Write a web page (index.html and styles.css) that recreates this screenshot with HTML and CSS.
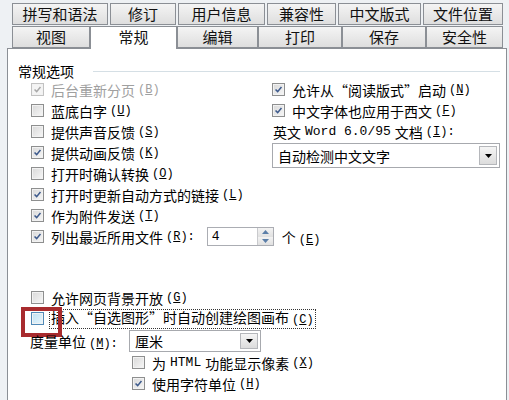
FILE: index.html
```html
<!DOCTYPE html>
<html lang="zh-CN">
<head>
    <meta charset="UTF-8">
    <title>选项 - 常规</title>
    <link rel="stylesheet" href="styles.css">
</head>
<body>

<div class="tabs">
    <div class="tab-row back">
        <div class="tab">拼写和语法</div>
        <div class="tab">修订</div>
        <div class="tab">用户信息</div>
        <div class="tab">兼容性</div>
        <div class="tab">中文版式</div>
        <div class="tab">文件位置</div>
    </div>
    <div class="tab-row front">
        <div class="tab">视图</div>
        <div class="tab active">常规</div>
        <div class="tab">编辑</div>
        <div class="tab">打印</div>
        <div class="tab">保存</div>
        <div class="tab">安全性</div>
    </div>
</div>

<div class="panel">
    <div class="group-title"><span>常规选项</span></div>

    <div class="columns">
        <div class="col-left">
            <div class="opt disabled"><span class="cb checked"><svg viewBox="0 0 13 13"><path d="M3 6.5 5.5 9 10 3.5"/></svg></span>后台重新分页<span class="key">(<u>B</u>)</span></div>
            <div class="opt"><span class="cb"></span>蓝底白字<span class="key">(<u>U</u>)</span></div>
            <div class="opt"><span class="cb"></span>提供声音反馈<span class="key">(<u>S</u>)</span></div>
            <div class="opt"><span class="cb checked"><svg viewBox="0 0 13 13"><path d="M3 6.5 5.5 9 10 3.5"/></svg></span>提供动画反馈<span class="key">(<u>K</u>)</span></div>
            <div class="opt"><span class="cb"></span>打开时确认转换<span class="key">(<u>O</u>)</span></div>
            <div class="opt"><span class="cb checked"><svg viewBox="0 0 13 13"><path d="M3 6.5 5.5 9 10 3.5"/></svg></span>打开时更新自动方式的链接<span class="key">(<u>L</u>)</span></div>
            <div class="opt"><span class="cb checked"><svg viewBox="0 0 13 13"><path d="M3 6.5 5.5 9 10 3.5"/></svg></span>作为附件发送<span class="key">(<u>T</u>)</span></div>
            <div class="opt"><span class="cb checked"><svg viewBox="0 0 13 13"><path d="M3 6.5 5.5 9 10 3.5"/></svg></span>列出最近所用文件<span class="key">(<u>R</u>):</span>
                <div class="spin">
                    <span class="spin-value">4</span>
                    <span class="spin-btns">
                        <span class="spin-btn"><svg viewBox="0 0 7 4"><path d="M0 4 3.5 0 7 4z"/></svg></span>
                        <span class="spin-btn"><svg viewBox="0 0 7 4"><path d="M0 0 3.5 4 7 0z"/></svg></span>
                    </span>
                </div>
                <span class="unit">个<span class="key">(<u>E</u>)</span></span>
            </div>
        </div>

        <div class="col-right">
            <div class="opt"><span class="cb checked"><svg viewBox="0 0 13 13"><path d="M3 6.5 5.5 9 10 3.5"/></svg></span>允许从“阅读版式”启动<span class="key">(<u>N</u>)</span></div>
            <div class="opt"><span class="cb checked"><svg viewBox="0 0 13 13"><path d="M3 6.5 5.5 9 10 3.5"/></svg></span>中文字体也应用于西文<span class="key">(<u>F</u>)</span></div>
            <div class="opt label">英文 <span class="mono">Word 6.0/95</span> 文档<span class="key">(<u>I</u>):</span></div>
            <div class="select wide">
                <span class="select-text">自动检测中文文字</span>
                <span class="drop"><svg viewBox="0 0 7 4"><path d="M0 0 3.5 4 7 0z"/></svg></span>
            </div>
        </div>
    </div>

    <div class="lower">
        <div class="opt"><span class="cb"></span>允许网页背景开放<span class="key">(<u>G</u>)</span></div>
        <div class="opt focused">
            <span class="cb hover"></span><span class="focus-text">插入“自选图形”时自动创建绘图画布<span class="key">(<u>C</u>)</span></span>
            <span class="mark"></span>
        </div>
        <div class="opt unit-row">
            <span class="unit-label">度量单位<span class="key">(<u>M</u>):</span></span>
            <div class="select short">
                <span class="select-text">厘米</span>
                <span class="drop"><svg viewBox="0 0 7 4"><path d="M0 0 3.5 4 7 0z"/></svg></span>
            </div>
        </div>
        <div class="opt sub"><span class="cb"></span>为 <span class="mono">HTML</span> 功能显示像素<span class="key">(<u>X</u>)</span></div>
        <div class="opt sub"><span class="cb checked"><svg viewBox="0 0 13 13"><path d="M3 6.5 5.5 9 10 3.5"/></svg></span>使用字符单位<span class="key">(<u>H</u>)</span></div>
    </div>
</div>

</body>
</html>
```

FILE: styles.css
```css
body {
    margin: 0;
    background-color: #eef1f4;
    font-family: "Noto Sans CJK SC", sans-serif;
    font-size: 14px;
    color: #000;
    overflow: hidden;
}

/* tabs */

.tabs {
    padding: 3px 0 0 12px;
}

.tab-row {
    display: flex;
    height: 22px;
}

.tab-row.back {
    gap: 2px;
}

.tab-row.front {
    margin-top: 1px;
}

.tab {
    box-sizing: border-box;
    height: 22px;
    border: 1px solid #8b8f95;
    background: linear-gradient(#f4f4f4, #dedede);
    font-size: 15px;
    line-height: 19px;
    text-align: center;
    color: #111;
}

.back .tab:nth-child(1) { width: 96px; }
.back .tab:nth-child(2) { width: 66px; }
.back .tab:nth-child(3) { width: 87px; }
.back .tab:nth-child(4) { width: 69px; }
.back .tab:nth-child(5) { width: 83px; }
.back .tab:nth-child(6) { width: 80px; }

.front .tab:nth-child(1) { width: 78px; }
.front .tab:nth-child(2) { width: 87px; }
.front .tab:nth-child(3) { width: 81px; }
.front .tab:nth-child(4) { width: 84px; }
.front .tab:nth-child(5) { width: 84px; }
.front .tab:nth-child(6) { width: 77px; }

.tab.active {
    position: relative;
    z-index: 1;
    height: 23px;
    margin-bottom: -1px;
    border-bottom: none;
    background: #fff;
    line-height: 20px;
}

/* panel */

.panel {
    box-sizing: border-box;
    width: 500px;
    height: 360px;
    margin-left: 7px;
    padding: 15px 0 0 10px;
    border: 1px solid #8b8f95;
    background-color: #fff;
}

.group-title {
    display: flex;
    align-items: center;
    height: 15px;
    line-height: 15px;
}

.group-title::after {
    content: "";
    flex: 1;
    margin: 0 6px 0 19px;
    border-top: 1px solid #d5dfe5;
}

.columns {
    display: flex;
    padding-left: 13px;
}

.col-left {
    flex-shrink: 0;
    width: 241px;
}

.col-right {
    flex: 1;
}

.opt {
    position: relative;
    display: flex;
    align-items: center;
    height: 21px;
    white-space: nowrap;
}

.opt > * {
    flex-shrink: 0;
}

.opt.disabled {
    color: #a0a0a0;
}

.key {
    margin-left: 3px;
    font-family: "Liberation Mono", monospace;
    font-size: 12px;
}

.mono {
    font-family: "Liberation Mono", monospace;
    font-size: 13px;
    margin: 0 4px;
}

.label {
    padding-left: 1px;
}

/* checkbox */

.cb {
    box-sizing: border-box;
    width: 13px;
    height: 13px;
    margin-right: 7px;
    border: 1px solid #8e8f8f;
    background: linear-gradient(135deg, #d8d8d8, #f7f7f7);
    box-shadow: inset 0 0 0 1px #f2f2f2;
}

.cb svg {
    display: block;
    width: 11px;
    height: 11px;
    fill: none;
    stroke: #3d5a8c;
    stroke-width: 1.8;
}

.disabled .cb {
    border-color: #c2c2c2;
    background: #f4f4f4;
}

.disabled .cb svg {
    stroke: #a8a8a8;
}

.cb.hover {
    border-color: #4f8ab8;
    background: linear-gradient(135deg, #bfe2f4, #e8f6fd);
}

/* spinner */

.spin {
    box-sizing: border-box;
    display: flex;
    width: 67px;
    height: 19px;
    margin-left: 12px;
    border: 1px solid #abadb3;
}

.spin-value {
    flex: 1;
    padding-left: 4px;
    line-height: 17px;
    font-family: "Liberation Mono", monospace;
    font-size: 13px;
}

.spin-btns {
    display: flex;
    flex-direction: column;
    width: 16px;
}

.spin-btn {
    flex: 1;
    display: flex;
    align-items: center;
    justify-content: center;
    background: linear-gradient(#f3f3f3, #e0e0e0);
    border-left: 1px solid #c9cacd;
}

.spin-btn svg {
    width: 7px;
    height: 4px;
    fill: #5b7ea8;
}

.unit {
    margin-left: 8px;
}

/* select */

.select {
    box-sizing: border-box;
    display: flex;
    align-items: center;
    border: 1px solid #a7a9ae;
    background-color: #fff;
}

.select.wide {
    width: 228px;
    height: 25px;
    margin-top: 1px;
}

.select.short {
    width: 132px;
    height: 22px;
}

.select-text {
    flex: 1;
    padding-left: 5px;
}

.drop {
    box-sizing: border-box;
    display: flex;
    align-items: center;
    justify-content: center;
    width: 18px;
    height: calc(100% - 4px);
    margin-right: 2px;
    border: 1px solid #b5b7bb;
    background: linear-gradient(#f5f5f5, #dcdcdc);
}

.drop svg {
    width: 7px;
    height: 4px;
    fill: #000;
}

/* lower section */

.lower {
    margin-top: 40px;
    padding-left: 13px;
}

.focus-text {
    margin-left: -2px;
    padding: 0 1px;
    line-height: 15px;
    border: 1px dotted #333;
}

.mark {
    position: absolute;
    left: -10px;
    top: -1px;
    width: 41px;
    height: 30px;
    box-sizing: border-box;
    border: 4px solid #a82b2e;
}

.unit-row {
    height: 22px;
    margin-top: 1px;
}

.unit-label {
    width: 99px;
    margin-left: -1px;
}

.sub {
    padding-left: 101px;
}
```
